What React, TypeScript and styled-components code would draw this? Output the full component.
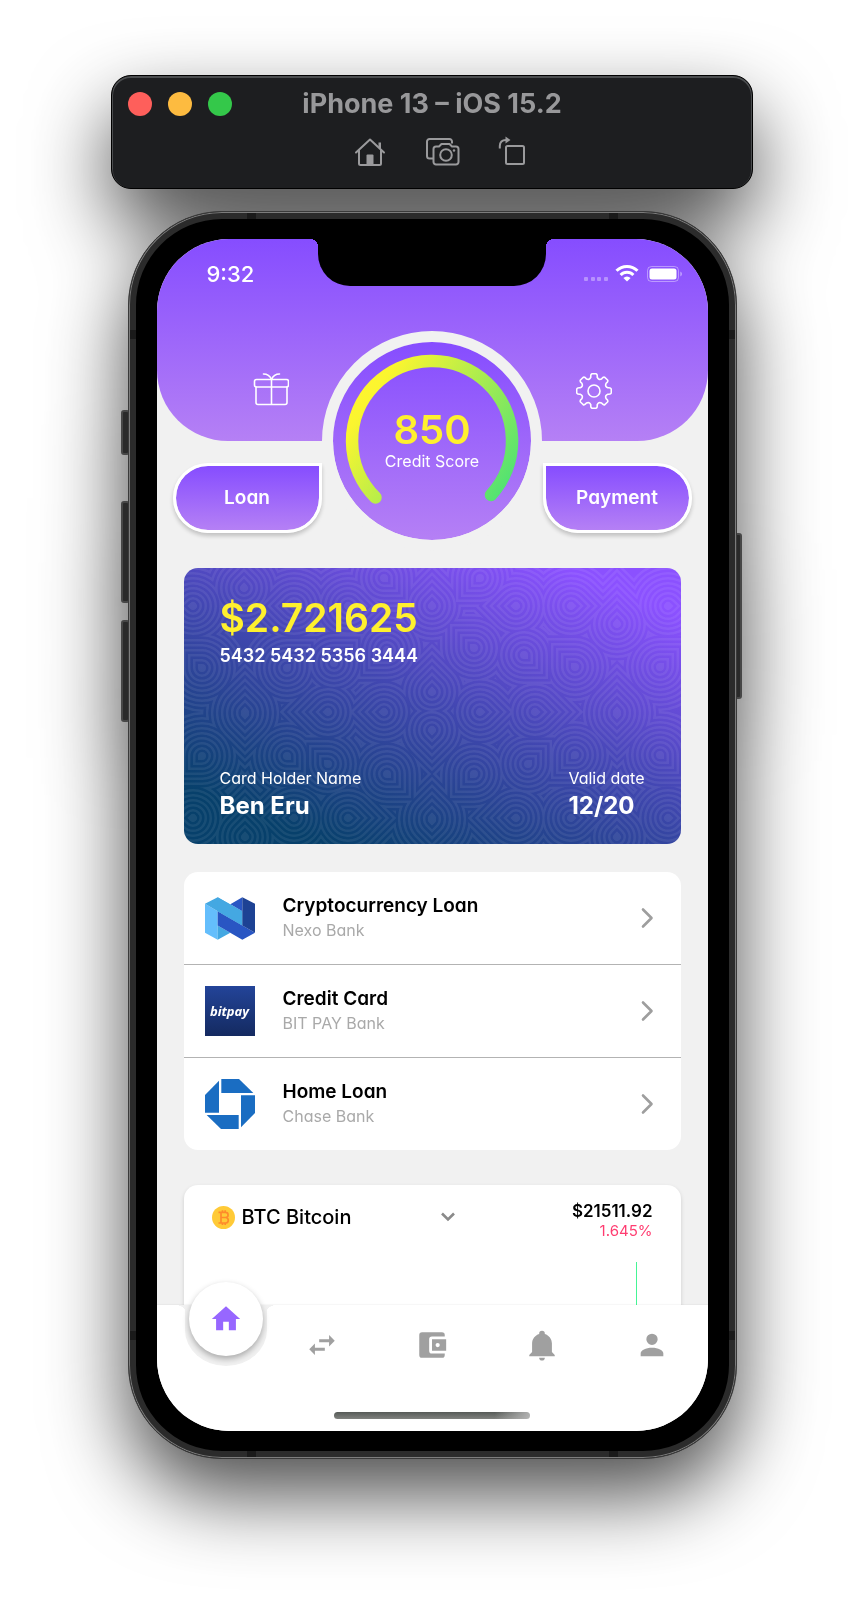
import React from "react";
import styled, { createGlobalStyle, css } from "styled-components";

const GlobalStyle = createGlobalStyle`
  *, *::before, *::after { box-sizing: border-box; }
  body {
    margin: 0;
    background: #fff;
    font-family: Inter, "Open Sans", sans-serif;
    font-feature-settings: "cv11";
    color: #000;
  }
  button, select { font: inherit; font-feature-settings: inherit; color: inherit; background: none; border: 0; padding: 0; margin: 0; cursor: pointer; }
  a { color: inherit; text-decoration: none; }
  h1, p, ul { margin: 0; padding: 0; list-style: none; }
  svg { display: block; flex: none; }
`;

const purple = "linear-gradient(180deg, #864dff 0%, #b580f5 100%)";

const Desktop = styled.main`
  display: flex;
  flex-direction: column;
  align-items: center;
  gap: 22px;
  padding: 75px 16px 151px;
  filter: drop-shadow(0 36px 40px rgba(0, 0, 0, 0.7));
`;

const TitleBar = styled.header`
  width: 100%;
  max-width: 642px;
  padding: 16px 16px 20px;
  border: 1px solid #000;
  border-radius: 20px;
  background: #1d1e20;
  box-shadow: inset 0 1px 0 1px #4b4d4f;
`;

const TitleRow = styled.div`
  display: grid;
  grid-template-columns: 1fr auto 1fr;
  align-items: center;
`;

const Lights = styled.div`
  display: flex;
  gap: 16px;
`;

const Light = styled.button<{ $color: string }>`
  width: 24px;
  height: 24px;
  border-radius: 50%;
  background: ${(p) => p.$color};
`;

const WindowTitle = styled.h1`
  font-size: 27px;
  line-height: 24px;
  font-weight: 700;
  color: #98989a;
  white-space: nowrap;
`;

const ToolRow = styled.div`
  display: flex;
  justify-content: center;
  gap: 40px;
  margin-top: 20px;
  padding-left: 20px;
`;

const ToolButton = styled.button`
  width: 32px;
  height: 32px;
`;

const PhoneWrap = styled.div`
  position: relative;
  width: 100%;
  max-width: 609px;
`;

const Phone = styled.div`
  position: relative;
  padding: 27px 28px;
  border-radius: 94px;
  background: #000;
  border: 1px solid #3a3a3a;
  box-shadow: inset 0 0 0 1px #7c7c7c, inset 0 0 0 7px #2b2b2b;
`;

const SideKey = styled.span<{ $side: "left" | "right"; $top: number; $height: number }>`
  position: absolute;
  ${(p) => p.$side}: ${(p) => (p.$side === "left" ? "-7px" : "-5px")};
  top: ${(p) => p.$top}px;
  width: 9px;
  height: ${(p) => p.$height}px;
  border: 2px solid #474747;
  border-radius: 3px;
  background: #2a2a2a;
`;

const Band = styled.span<{ $edge: "top" | "bottom" | "left" | "right"; $from: "top" | "bottom" | "left" | "right"; $at: number }>`
  position: absolute;
  background: #1a1a1a;
  ${(p) => p.$edge}: 1px;
  ${(p) => p.$from}: ${(p) => p.$at}px;
  ${(p) =>
    p.$edge === "top" || p.$edge === "bottom"
      ? css`width: 9px; height: 6px;`
      : css`width: 6px; height: 9px;`}
`;

const Screen = styled.div`
  position: relative;
  overflow: hidden;
  border-radius: 72px;
  background: #f1f1f1;
`;

const Notch = styled.div`
  position: absolute;
  z-index: 2;
  top: 0;
  left: 50%;
  width: 228px;
  height: 47px;
  margin-left: -114px;
  border-radius: 0 0 32px 32px;
  background: #000;
  &::before, &::after {
    content: "";
    position: absolute;
    top: 0;
    width: 8px;
    height: 8px;
  }
  &::before { left: -8px; background: radial-gradient(circle at 0 100%, transparent 8px, #000 8px); }
  &::after { right: -8px; background: radial-gradient(circle at 100% 100%, transparent 8px, #000 8px); }
`;

const Hero = styled.section`
  position: relative;
`;

const HeroPanel = styled.div`
  height: 202px;
  border-radius: 0 0 71px 71px;
  background: ${purple};
`;

const StatusBar = styled.div`
  display: flex;
  justify-content: space-between;
  align-items: center;
  padding: 20px 26px 0 50px;
  height: 50px;
  color: #fff;
`;

const Clock = styled.time`
  font-size: 22px;
  line-height: 28px;
  font-weight: 500;
`;

const HeroIcons = styled.div`
  display: flex;
  justify-content: space-between;
  padding: 84px 96px 0;
`;

const IconButton = styled.button`
  width: 36px;
  height: 36px;
`;

const Actions = styled.div`
  display: flex;
  justify-content: space-between;
  padding: 22px 16px 0;
`;

const ActionButton = styled.button<{ $side: "left" | "right" }>`
  width: 149px;
  height: 70px;
  border: 3px solid #fff;
  border-radius: ${(p) => (p.$side === "left" ? "35px 0 35px 35px" : "0 35px 35px 35px")};
  background: ${purple} padding-box;
  box-shadow: 0 3px 4px rgba(0, 0, 0, 0.2);
  color: #fff;
  font-size: 19px;
  line-height: 24px;
  font-weight: 600;
`;

const Dial = styled.div`
  position: absolute;
  top: 92px;
  left: 50%;
  width: 220px;
  height: 220px;
  margin-left: -110px;
  padding-bottom: 2px;
  border: 11px solid #f1f1f1;
  border-radius: 50%;
  background: ${purple} padding-box;
  display: flex;
  flex-direction: column;
  align-items: center;
  justify-content: center;
`;

const DialArc = styled.svg`
  position: absolute;
  inset: 0;
`;

const Score = styled.strong`
  font-size: 40px;
  line-height: 42px;
  font-weight: 600;
  color: #fff02e;
`;

const ScoreLabel = styled.span`
  font-size: 16px;
  line-height: 20px;
  color: #fff;
`;

const Content = styled.div`
  padding: 35px 27px 0;
`;

const BankCard = styled.section`
  position: relative;
  overflow: hidden;
  display: flex;
  flex-direction: column;
  justify-content: space-between;
  min-height: 276px;
  padding: 28px 36px 22px;
  border-radius: 14px;
  color: #fff;
  background: linear-gradient(22deg, #07406b 12%, #4347b3 52%, #8b51ff 90%);
`;

const CardPattern = styled.svg`
  position: absolute;
  inset: 0;
  width: 100%;
  height: 100%;
`;

const CardBlock = styled.div`
  position: relative;
`;

const CardFooter = styled.div`
  position: relative;
  display: flex;
  justify-content: space-between;
`;

const Balance = styled.p`
  font-size: 39px;
  line-height: 44px;
  font-weight: 600;
  color: #fff02e;
`;

const CardNumber = styled.p`
  font-size: 18px;
  line-height: 32px;
  font-weight: 600;
`;

const CardLabel = styled.p`
  font-size: 16px;
  line-height: 24px;
`;

const CardValue = styled.p`
  font-size: 24px;
  line-height: 32px;
  font-weight: 700;
`;

const BankList = styled.ul`
  margin-top: 28px;
  border-radius: 14px;
  background: #fff;
`;

const BankItem = styled.li`
  & + & { border-top: 1px solid #b3b3b3; }
`;

const BankLink = styled.a`
  display: flex;
  align-items: center;
  height: 92px;
  padding: 0 26px 0 21px;
`;

const BankLogo = styled.span`
  display: flex;
  width: 50px;
  margin-right: 28px;
`;

const BitpayMark = styled.span`
  display: flex;
  align-items: center;
  justify-content: center;
  width: 50px;
  height: 50px;
  background: linear-gradient(#234499, #142a60);
  color: #fff;
  font: italic 700 13px/16px "Open Sans", sans-serif;
`;

const BankText = styled.span`
  flex: 1;
  display: flex;
  flex-direction: column;
`;

const BankTitle = styled.strong`
  font-size: 19px;
  line-height: 24px;
  font-weight: 600;
`;

const BankName = styled.span`
  font-size: 16px;
  line-height: 24px;
  color: #a9a9a9;
`;

const MarketCard = styled.section`
  margin-top: 35px;
  height: 120px;
  padding: 16px 28px 0;
  border-radius: 14px 14px 0 0;
  background: #fff;
  box-shadow: 0 2px 4px rgba(0, 0, 0, 0.15);
`;

const MarketHead = styled.div`
  display: flex;
  justify-content: space-between;
`;

const CoinPicker = styled.label`
  position: relative;
  display: flex;
  align-items: center;
  gap: 7px;
  width: 244px;
  height: 32px;
`;

const CoinSelect = styled.select`
  flex: 1;
  appearance: none;
  font-size: 20px;
  line-height: 32px;
  font-weight: 500;
  outline: none;
`;

const PickerArrow = styled.svg`
  pointer-events: none;
`;

const Quote = styled.div`
  text-align: right;
`;

const Price = styled.p`
  font-size: 17px;
  line-height: 20px;
  font-weight: 600;
`;

const Change = styled.p`
  font-size: 15px;
  line-height: 20px;
  color: #ff3d71;
`;

const ChartLine = styled.div`
  width: 1px;
  height: 43px;
  margin: 21px 16px 0 auto;
  background: #45f595;
`;

const TabBar = styled.nav`
  position: relative;
  padding-bottom: 12px;
  background: #fff;
  box-shadow: 0 -1px 1px rgba(0, 0, 0, 0.03);
`;

const Tabs = styled.ul`
  display: grid;
  grid-template-columns: repeat(5, 1fr);
  padding-top: 23px;
  height: 107px;
`;

const Tab = styled.li`
  display: flex;
  justify-content: center;
`;

const TabLink = styled.a`
  width: 34px;
  height: 34px;
  color: #a0a0a0;
`;

const TabDip = styled.span`
  position: absolute;
  top: 0;
  left: 28px;
  width: 82px;
  height: 61px;
  border-radius: 0 0 41px 41px / 0 0 36px 36px;
  background: #f1f1f1;
  &::before, &::after {
    content: "";
    position: absolute;
    top: 0;
    width: 10px;
    height: 6px;
  }
  &::before { right: 100%; background: radial-gradient(ellipse 10px 6px at 0 100%, transparent 98%, #f1f1f1 100%); }
  &::after { left: 100%; background: radial-gradient(ellipse 10px 6px at 100% 100%, transparent 98%, #f1f1f1 100%); }
`;

const HomeBubble = styled.a`
  position: absolute;
  top: -23px;
  left: 32px;
  width: 74px;
  height: 74px;
  display: grid;
  place-items: center;
  border-radius: 50%;
  background: #fff;
  color: #9767ff;
  box-shadow: 0 3px 6px rgba(0, 0, 0, 0.3);
`;

const HomeIndicator = styled.div`
  width: 196px;
  height: 7px;
  margin: 0 auto;
  border-radius: 4px;
  background: linear-gradient(90deg, transparent 82%, rgba(190, 190, 190, 0.85) 100%), linear-gradient(#565a57, #80827f);
`;

/* Teardrops that seed the card's contour pattern: x, y, rotation of the tip. */
const drops: [number, number, number][] = [
  [60, 20, 0], [248, 38, 0], [332, 38, -90], [290, 80, -45], [391, 99, -45],
  [340, 87, 135], [476, 99, 45], [433, 56, 0], [144, 144, -90], [351, 144, 90],
  [200, 144, -90], [296, 144, 90], [248, 124, 0], [248, 162, 180], [18, 100, -45],
  [103, 100, 45], [18, 188, -135], [103, 188, 135], [144, 196, -45], [203, 206, 135],
  [290, 206, -135], [344, 196, 45], [391, 187, -135], [476, 187, 135],
  [433, 144, 0], [433, 146, 180], [61, 144, 0], [61, 146, 180], [164, 250, 90],
  [332, 250, -90], [248, 250, 0], [248, 252, 180], [61, 269, 0], [433, 269, 0],
  [200, 10, 135], [296, 10, -135], [9, 38, -90], [484, 38, 90], [9, 250, -90],
  [484, 250, 90], [110, 250, -90], [387, 250, 90], [164, 38, 90], [110, 38, -90],
  [387, 38, 90], [203, 82, -135], [150, 95, 45],
];

const rings = [44, 41.5, 39, 36.5, 34, 31.5, 29, 26.5, 24, 21.5, 19, 16.5, 14, 11.5, 9, 6.5, 4];

const dropPath = (r: number) => {
  const k = r * 0.707;
  return `M0 ${-r * 1.42}L${k} ${-k}A${r} ${r} 0 1 1 ${-k} ${-k}Z`;
};

function Contours() {
  return (
    <CardPattern viewBox="0 0 497 276" preserveAspectRatio="xMidYMid slice" aria-hidden="true">
      <mask id="contours">
        {rings.map((r, i) =>
          drops.map(([x, y, a], j) => (
            <path key={`${i}-${j}`} d={dropPath(r)} transform={`translate(${x} ${y}) rotate(${a})`} fill={i % 2 ? "#000" : "#fff"} />
          ))
        )}
      </mask>
      <rect width="497" height="276" fill="#fff" opacity="0.07" mask="url(#contours)" />
    </CardPattern>
  );
}

const gearPath = (() => {
  const point = (deg: number, r: number) => {
    const t = ((deg - 90) * Math.PI) / 180;
    return `${(18 + r * Math.cos(t)).toFixed(2)} ${(18 + r * Math.sin(t)).toFixed(2)}`;
  };
  let d = "";
  for (let i = 0; i < 8; i++) {
    const a = i * 45;
    d += `${i ? "L" : "M"}${point(a - 13, 14.2)}Q${point(a - 12, 17.4)} ${point(a - 6, 17.4)}L${point(a + 6, 17.4)}Q${point(a + 12, 17.4)} ${point(a + 13, 14.2)}Q${point(a + 22.5, 11.6)} ${point(a + 32, 14.2)}`;
  }
  return d + "Z";
})();

const GiftIcon = () => (
  <svg width="36" height="36" viewBox="0 0 36 36" fill="none" stroke="#fff" strokeWidth="1.6" strokeLinejoin="round" strokeLinecap="round">
    <rect x="1.5" y="6.5" width="34" height="7.5" rx="2" />
    <path d="M3 14V29.5a2 2 0 0 0 2 2H32a2 2 0 0 0 2-2V14M18.500 6.500V31.500M10.500 1C14 1 17 3 18.500 6.500C20 3 23 1 26.500 1" />
  </svg>
);

const GearIcon = () => (
  <svg width="36" height="36" viewBox="0 0 36 36" fill="none" stroke="#fff" strokeWidth="1.6" strokeLinejoin="round">
    <path d={gearPath} />
    <circle cx="18" cy="18" r="6" />
  </svg>
);

const Chevron = () => (
  <svg width="14" height="22" viewBox="0 0 14 22" fill="none" stroke="#9e9e9e" strokeWidth="2.6" strokeLinecap="round" strokeLinejoin="round">
    <path d="M2 2.500L10.500 11L2 19.500" />
  </svg>
);

const NexoLogo = () => (
  <svg width="50" height="43" viewBox="0 0 150 128">
    <path fill="#64befc" d="M0 20L38 42V128L0 107Z" />
    <path fill="#44a8e2" d="M0 20L38 0L112 42V85L38 42ZM38 85L76 107L38 128Z" />
    <path fill="#2956c3" d="M76 21L112 0V42ZM38 42L150 107L112 128L38 85Z" />
    <path fill="#44a8e2" d="M38 42V0L112 42V85Z" />
    <path fill="#1d4294" d="M112 0L150 20V107L112 85Z" />
  </svg>
);

const ChaseLogo = () => (
  <svg width="50" height="50" viewBox="0 0 150 150" fill="#1a6dc2">
    {[0, 90, 180, 270].map((a) => (
      <path key={a} d="M49 0H102L145 42H49Z" transform={`rotate(${a} 75 75)`} />
    ))}
  </svg>
);

const TabIcon = ({ d }: { d: string }) => (
  <svg width="34" height="34" viewBox="0 0 24 24" fill="currentColor">
    <path d={d} />
  </svg>
);

const icons = {
  home: "M10 20V14H14V20H19V12H22L12 3L2 12H5V20Z",
  swap: "M21 9L17 5V8H10V10H17V13ZM7 11L3 15L7 19V16H14V14H7Z",
  wallet:
    "M21 18V19A2 2 0 0 1 19 21H5A2 2 0 0 1 3 19V5A2 2 0 0 1 5 3H19A2 2 0 0 1 21 5V6H12A2 2 0 0 0 10 8V16A2 2 0 0 0 12 18ZM12 16H22V8H12ZM16 13.500A1.500 1.500 0 0 1 16 10.500A1.500 1.500 0 0 1 16 13.500Z",
  bell: "M21 19V20H3V19L5 17V11C5 7.900 7.030 5.170 10 4.290V4A2 2 0 0 1 14 4V4.290C16.970 5.170 19 7.900 19 11V17ZM14 21A2 2 0 0 1 10 21Z",
  person:
    "M12 4A4 4 0 0 1 12 12A4 4 0 0 1 12 4ZM12 14C16.420 14 20 15.790 20 18V20H4V18C4 15.790 7.580 14 12 14Z",
};

const tabs = [
  { label: "Transfers", d: icons.swap },
  { label: "Wallet", d: icons.wallet },
  { label: "Notifications", d: icons.bell },
  { label: "Profile", d: icons.person },
];

const banks = [
  { title: "Cryptocurrency Loan", bank: "Nexo Bank", logo: <NexoLogo /> },
  { title: "Credit Card", bank: "BIT PAY Bank", logo: <BitpayMark>bitpay</BitpayMark> },
  { title: "Home Loan", bank: "Chase Bank", logo: <ChaseLogo /> },
];

const StatusIcons = () => (
  <svg width="100" height="20" viewBox="0 0 100 20" fill="#fff">
    <g opacity="0.35">
      <rect x="2" y="13" width="4" height="4" rx="1" />
      <rect x="9" y="13" width="4" height="4" rx="1" />
      <rect x="15" y="13" width="4" height="4" rx="1" />
      <rect x="22" y="13" width="4" height="4" rx="1" />
    </g>
    <g fill="none" stroke="#fff" strokeWidth="3">
      <path d="M34.500 6.800A15 15 0 0 1 55.500 6.800" />
      <path d="M38.600 11A9 9 0 0 1 51.400 11" />
    </g>
    <path d="M45 17.600L41.400 14A5 5 0 0 1 48.600 14Z" />
    <rect x="65.500" y="2.500" width="31" height="15" rx="4" fill="none" stroke="#fff" strokeOpacity="0.4" />
    <rect x="67.500" y="4.500" width="27" height="11" rx="2.500" />
    <path d="M98.300 7.500V12.500Q100 11.800 100 10Q100 8.200 98.300 7.500Z" opacity="0.45" />
  </svg>
);

export default function App() {
  return (
    <>
      <GlobalStyle />
      <Desktop>
        <TitleBar>
          <TitleRow>
            <Lights>
              <Light $color="#fe5f5b" aria-label="Close" />
              <Light $color="#fdbb40" aria-label="Minimize" />
              <Light $color="#34c84a" aria-label="Zoom" />
            </Lights>
            <WindowTitle>iPhone 13 – iOS 15.2</WindowTitle>
          </TitleRow>
          <ToolRow>
            <ToolButton aria-label="Home">
              <svg width="32" height="32" viewBox="0 0 32 32" fill="none" stroke="#9a9a9c" strokeWidth="2" strokeLinecap="round" strokeLinejoin="round">
                <path d="M2 16.500L16 3.500L30 16.500M5 14.500V27.500a1.500 1.500 0 0 0 1.500 1.500H25.500a1.500 1.500 0 0 0 1.500-1.500V14.500" />
                <path d="M24.500 6.500H27V13.500L24.500 11.500Z" fill="#9a9a9c" stroke="none" />
                <path d="M12.500 29V19.500a1 1 0 0 1 1-1h5a1 1 0 0 1 1 1V29Z" fill="#9a9a9c" stroke="none" />
              </svg>
            </ToolButton>
            <ToolButton aria-label="Screenshot">
              <svg width="34" height="32" viewBox="0 0 34 32" fill="none" stroke="#9a9a9c" strokeWidth="2" strokeLinejoin="round">
                <path d="M7 22.500H3.500a2.500 2.500 0 0 1-2.500-2.500V5.500a2.500 2.500 0 0 1 2.500-2.500H23.500a2.500 2.500 0 0 1 2.500 2.500V7.500" />
                <path d="M10 10.500H13L15.500 8H23.500L26 10.500H30a2.500 2.500 0 0 1 2.500 2.500V26a2.500 2.500 0 0 1-2.500 2.500H10A2.500 2.500 0 0 1 7.500 26V13a2.500 2.500 0 0 1 2.500-2.500Z" />
                <circle cx="20" cy="19" r="5.800" />
                <circle cx="28" cy="14.500" r="1.200" fill="#9a9a9c" stroke="none" />
              </svg>
            </ToolButton>
            <ToolButton aria-label="Rotate">
              <svg width="32" height="32" viewBox="0 0 32 32" fill="none" stroke="#9a9a9c" strokeWidth="2" strokeLinejoin="round">
                <rect x="8" y="10" width="18" height="18" rx="1.500" />
                <path d="M1.800 12.500V10Q2 4 8 4" />
                <path d="M7.500 0.500L12.500 4L7.500 7.500Z" fill="#9a9a9c" stroke="none" />
              </svg>
            </ToolButton>
          </ToolRow>
        </TitleBar>

        <PhoneWrap>
          <SideKey $side="left" $top={199} $height={45} />
          <SideKey $side="left" $top={290} $height={102} />
          <SideKey $side="left" $top={409} $height={102} />
          <SideKey $side="right" $top={322} $height={166} />
          <Phone>
            <Band $edge="top" $from="left" $at={118} />
            <Band $edge="top" $from="right" $at={118} />
            <Band $edge="bottom" $from="left" $at={118} />
            <Band $edge="bottom" $from="right" $at={118} />
            <Band $edge="left" $from="top" $at={118} />
            <Band $edge="right" $from="top" $at={118} />
            <Band $edge="left" $from="bottom" $at={118} />
            <Band $edge="right" $from="bottom" $at={118} />
            <Screen>
              <Notch />
              <Hero>
                <HeroPanel>
                  <StatusBar>
                    <Clock>9:32</Clock>
                    <StatusIcons />
                  </StatusBar>
                  <HeroIcons>
                    <IconButton aria-label="Rewards"><GiftIcon /></IconButton>
                    <IconButton aria-label="Settings"><GearIcon /></IconButton>
                  </HeroIcons>
                </HeroPanel>
                <Actions>
                  <ActionButton $side="left">Loan</ActionButton>
                  <ActionButton $side="right">Payment</ActionButton>
                </Actions>
                <Dial>
                  <DialArc viewBox="0 0 198 198" fill="none" aria-hidden="true">
                    <defs>
                      <linearGradient id="arc" x1="20" y1="50" x2="170" y2="155" gradientUnits="userSpaceOnUse">
                        <stop offset="0" stopColor="#fff52e" />
                        <stop offset="0.100" stopColor="#fbf52f" />
                        <stop offset="1" stopColor="#4fe273" />
                      </linearGradient>
                    </defs>
                    <path d="M42.500 155.500A80 80 0 1 1 158 153" stroke="url(#arc)" strokeWidth="12.500" strokeLinecap="round" />
                  </DialArc>
                  <Score>850</Score>
                  <ScoreLabel>Credit Score</ScoreLabel>
                </Dial>
              </Hero>

              <Content>
                <BankCard>
                  <Contours />
                  <CardBlock>
                    <Balance>$2.721625</Balance>
                    <CardNumber>5432 5432 5356 3444</CardNumber>
                  </CardBlock>
                  <CardFooter>
                    <div>
                      <CardLabel>Card Holder Name</CardLabel>
                      <CardValue>Ben Eru</CardValue>
                    </div>
                    <div>
                      <CardLabel>Valid date</CardLabel>
                      <CardValue>12/20</CardValue>
                    </div>
                  </CardFooter>
                </BankCard>

                <BankList>
                  {banks.map((b) => (
                    <BankItem key={b.title}>
                      <BankLink href="#">
                        <BankLogo>{b.logo}</BankLogo>
                        <BankText>
                          <BankTitle>{b.title}</BankTitle>
                          <BankName>{b.bank}</BankName>
                        </BankText>
                        <Chevron />
                      </BankLink>
                    </BankItem>
                  ))}
                </BankList>

                <MarketCard>
                  <MarketHead>
                    <CoinPicker>
                      <svg width="23" height="23" viewBox="0 0 23 23" aria-hidden="true">
                        <circle cx="11.500" cy="11.500" r="11.500" fill="#ffca37" />
                        <path d="M6.500 6.300H13.500A2.500 2.500 0 0 1 13.500 11.500H9H14A2.800 2.800 0 0 1 14 17H6.500M9 6.300V17M10.500 4.300V6.500M13.200 4.300V6.500M10.500 17V19M13.200 17V19" fill="none" stroke="#ff8a2b" strokeWidth="1.700" />
                      </svg>
                      <CoinSelect defaultValue="btc" aria-label="Coin">
                        <option value="btc">BTC Bitcoin</option>
                      </CoinSelect>
                      <PickerArrow width="16" height="12" viewBox="0 0 16 12" fill="none" stroke="#8a8a8a" strokeWidth="2.600">
                        <path d="M2 2.500L8 8.500L14 2.500" />
                      </PickerArrow>
                    </CoinPicker>
                    <Quote>
                      <Price>$21511.92</Price>
                      <Change>1.645%</Change>
                    </Quote>
                  </MarketHead>
                  <ChartLine />
                </MarketCard>
              </Content>

              <TabBar aria-label="Main">
                <TabDip />
                <HomeBubble href="#" aria-label="Home"><TabIcon d={icons.home} /></HomeBubble>
                <Tabs>
                  <Tab aria-hidden="true" />
                  {tabs.map((t) => (
                    <Tab key={t.label}>
                      <TabLink href="#" aria-label={t.label}><TabIcon d={t.d} /></TabLink>
                    </Tab>
                  ))}
                </Tabs>
                <HomeIndicator />
              </TabBar>
            </Screen>
          </Phone>
        </PhoneWrap>
      </Desktop>
    </>
  );
}
